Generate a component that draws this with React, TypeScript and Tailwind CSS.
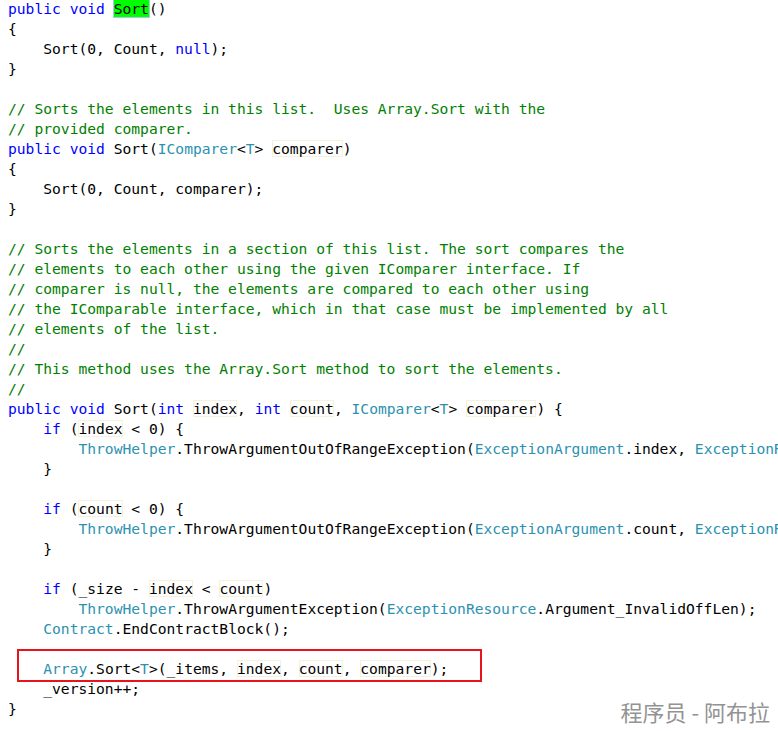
import React from 'react';

type Tok = [string, string?];

// k = keyword, t = type, c = comment, h = find highlight, r = reference box
const K = (s: string): Tok => [s, 'k'];
const T = (s: string): Tok => [s, 't'];
const C = (s: string): Tok => [s, 'c'];
const R = (s: string): Tok => [s, 'r'];
const P = (s: string): Tok => [s];

const lines: Tok[][] = [
  [K('public'), P(' '), K('void'), P(' '), ['Sort', 'h'], P('()')],
  [P('{')],
  [P('    Sort(0, Count, '), K('null'), P(');')],
  [P('}')],
  [],
  [C('// Sorts the elements in this list.  Uses Array.Sort with the')],
  [C('// provided comparer.')],
  [K('public'), P(' '), K('void'), P(' Sort('), T('IComparer'), P('<'), T('T'), P('> '), R('comparer'), P(')')],
  [P('{')],
  [P('    Sort(0, Count, comparer);')],
  [P('}')],
  [],
  [C('// Sorts the elements in a section of this list. The sort compares the')],
  [C('// elements to each other using the given IComparer interface. If')],
  [C('// comparer is null, the elements are compared to each other using')],
  [C('// the IComparable interface, which in that case must be implemented by all')],
  [C('// elements of the list.')],
  [C('//')],
  [C('// This method uses the Array.Sort method to sort the elements.')],
  [C('//')],
  [
    K('public'), P(' '), K('void'), P(' Sort('), K('int'), P(' '), R('index'), P(', '), K('int'), P(' '),
    R('count'), P(', '), T('IComparer'), P('<'), T('T'), P('> '), R('comparer'), P(') {'),
  ],
  [P('    '), K('if'), P(' ('), R('index'), P(' < 0) {')],
  [
    P('        '), T('ThrowHelper'), P('.ThrowArgumentOutOfRangeException('), T('ExceptionArgument'),
    P('.index, '), T('ExceptionResource'), P('.ArgumentOutOfRange_NeedNonNegNum);'),
  ],
  [P('    }')],
  [],
  [P('    '), K('if'), P(' ('), R('count'), P(' < 0) {')],
  [
    P('        '), T('ThrowHelper'), P('.ThrowArgumentOutOfRangeException('), T('ExceptionArgument'),
    P('.count, '), T('ExceptionResource'), P('.ArgumentOutOfRange_NeedNonNegNum);'),
  ],
  [P('    }')],
  [],
  [P('    '), K('if'), P(' (_size - '), R('index'), P(' < '), R('count'), P(')')],
  [
    P('        '), T('ThrowHelper'), P('.ThrowArgumentException('), T('ExceptionResource'),
    P('.Argument_InvalidOffLen);'),
  ],
  [P('    '), T('Contract'), P('.EndContractBlock();')],
  [],
  [P('    '), T('Array'), P('.Sort<'), T('T'), P('>(_items, '), R('index'), P(', '), R('count'), P(', '), R('comparer'), P(');')],
  [P('    _version++;')],
  [P('}')],
];

const tokClass = (kind?: string) => {
  switch (kind) {
    case 'k':
      return 'text-[#0000ff]';
    case 't':
      return 'text-[#2b91af]';
    case 'c':
      return 'text-[#008000]';
    case 'h':
      return 'bg-[#00ff00] shadow-[0_0_0_1px_#a8c8f0]';
    case 'r':
      return 'shadow-[inset_0_0_0_1px_#f6f2d8]';
    default:
      return '';
  }
};

export default function App() {
  return (
    <div className="relative w-[778px] h-[731px] overflow-hidden bg-white">
      <pre className="px-2 -mt-px text-[14.63px] leading-[20px] text-black font-['DejaVu_Sans_Mono',monospace]">
        {lines.map((line, i) => (
          <div key={i} className="relative h-5 whitespace-pre">
            {line.map(([text, kind], j) => (
              <span key={j} className={tokClass(kind)}>
                {text}
              </span>
            ))}
            {i === 33 && (
              <div className="absolute left-[9px] top-[-10px] w-[465px] h-[33px] border-2 border-[#e8141c]" />
            )}
          </div>
        ))}
      </pre>

      {/* watermark */}
      <div className="absolute right-[8px] bottom-[9px] text-[22px] leading-none text-[#939393] font-['Noto_Sans_CJK_SC',sans-serif]">
        程序员 - 阿布拉
      </div>
    </div>
  );
}
